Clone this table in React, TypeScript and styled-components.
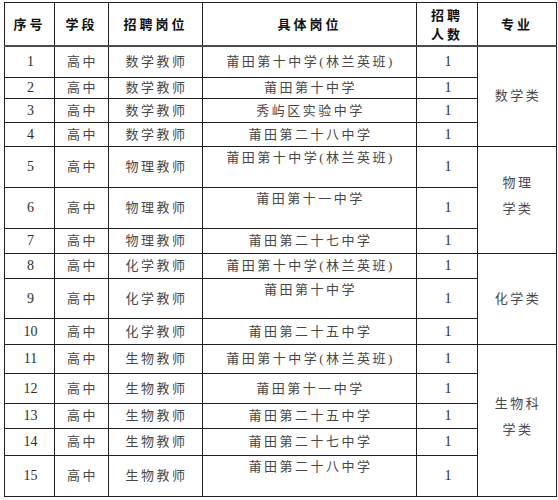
import React from "react";
import styled, { createGlobalStyle } from "styled-components";

const GlobalStyle = createGlobalStyle`
  html, body { margin: 0; padding: 0; background: #ffffff; }
  body { font-family: "Liberation Serif", "Noto Sans CJK SC", serif; }
`;

const Page = styled.div`
  width: 558px;
  height: 500px;
  padding: 2px 0 0 4px;
  box-sizing: border-box;
  background: #ffffff;
`;

const Table = styled.table`
  width: 552px;
  table-layout: fixed;
  border-collapse: collapse;
  font-family: "Liberation Serif", "Noto Sans CJK SC", serif;
`;

const Row = styled.tr<{ $h: number }>`
  height: ${(p) => p.$h}px;
`;

const HeadCell = styled.th`
  border: 1px solid #1e1e1e;
  border-bottom: 2px solid #4a4a4a;
  padding: 0;
  font-family: "Noto Sans CJK SC", sans-serif;
  font-weight: 700;
  font-size: 13px;
  line-height: 19px;
  letter-spacing: 3px;
  color: #111111;
  text-align: center;
  vertical-align: middle;
  white-space: pre-line;
`;

const Cell = styled.td<{ $top?: boolean; $num?: boolean }>`
  border: 1px solid #1e1e1e;
  padding: ${(p) => (p.$top ? "2px 0 0 2px" : "0 0 0 2px")};
  font-size: ${(p) => (p.$num ? "14px" : "13px")};
  line-height: 18px;
  letter-spacing: ${(p) => (p.$num ? "0" : "2.5px")};
  color: ${(p) => (p.$num ? "#2e2e2e" : "#474747")};
  text-align: center;
  vertical-align: ${(p) => (p.$top ? "top" : "middle")};
  white-space: nowrap;
`;

const MajorCell = styled.td<{ $lift?: boolean }>`
  border: 1px solid #1e1e1e;
  padding: ${(p) => (p.$lift ? "0 0 8px 2px" : "0 0 0 2px")};
  font-size: 13px;
  line-height: 26px;
  letter-spacing: 2.5px;
  color: #474747;
  text-align: center;
  vertical-align: middle;
  white-space: pre-line;
`;

type Item = {
  n: number;
  pos: string;
  school: string;
  h: number;
  top?: boolean;
  major?: { text: string; span: number; lift?: boolean };
};

const items: Item[] = [
  { n: 1, pos: "数学教师", school: "莆田第十中学(林兰英班)", h: 32, major: { text: "数学类", span: 4 } },
  { n: 2, pos: "数学教师", school: "莆田第十中学", h: 21 },
  { n: 3, pos: "数学教师", school: "秀屿区实验中学", h: 24 },
  { n: 4, pos: "数学教师", school: "莆田第二十八中学", h: 24 },
  { n: 5, pos: "物理教师", school: "莆田第十中学(林兰英班)", h: 41, top: true, major: { text: "物理\n学类", span: 3, lift: true } },
  { n: 6, pos: "物理教师", school: "莆田第十一中学", h: 41, top: true },
  { n: 7, pos: "物理教师", school: "莆田第二十七中学", h: 25 },
  { n: 8, pos: "化学教师", school: "莆田第十中学(林兰英班)", h: 25, major: { text: "化学类", span: 3 } },
  { n: 9, pos: "化学教师", school: "莆田第十中学", h: 40, top: true },
  { n: 10, pos: "化学教师", school: "莆田第二十五中学", h: 26 },
  { n: 11, pos: "生物教师", school: "莆田第十中学(林兰英班)", h: 29, major: { text: "生物科\n学类", span: 5, lift: true } },
  { n: 12, pos: "生物教师", school: "莆田第十一中学", h: 30 },
  { n: 13, pos: "生物教师", school: "莆田第二十五中学", h: 25 },
  { n: 14, pos: "生物教师", school: "莆田第二十七中学", h: 27 },
  { n: 15, pos: "生物教师", school: "莆田第二十八中学", h: 41, top: true },
];

export default function App() {
  return (
    <>
      <GlobalStyle />
      <Page>
        <Table>
          <colgroup>
            <col style={{ width: 50 }} />
            <col style={{ width: 54 }} />
            <col style={{ width: 94 }} />
            <col style={{ width: 214 }} />
            <col style={{ width: 61 }} />
            <col style={{ width: 79 }} />
          </colgroup>
          <thead>
            <Row $h={43}>
              <HeadCell>序号</HeadCell>
              <HeadCell>学段</HeadCell>
              <HeadCell>招聘岗位</HeadCell>
              <HeadCell>具体岗位</HeadCell>
              <HeadCell>{"招聘\n人数"}</HeadCell>
              <HeadCell>专业</HeadCell>
            </Row>
          </thead>
          <tbody>
            {items.map((it) => (
              <Row key={it.n} $h={it.h}>
                <Cell $num>{it.n}</Cell>
                <Cell>高中</Cell>
                <Cell>{it.pos}</Cell>
                <Cell $top={it.top}>{it.school}</Cell>
                <Cell $num>1</Cell>
                {it.major && (
                  <MajorCell rowSpan={it.major.span} $lift={it.major.lift}>
                    {it.major.text}
                  </MajorCell>
                )}
              </Row>
            ))}
          </tbody>
        </Table>
      </Page>
    </>
  );
}
